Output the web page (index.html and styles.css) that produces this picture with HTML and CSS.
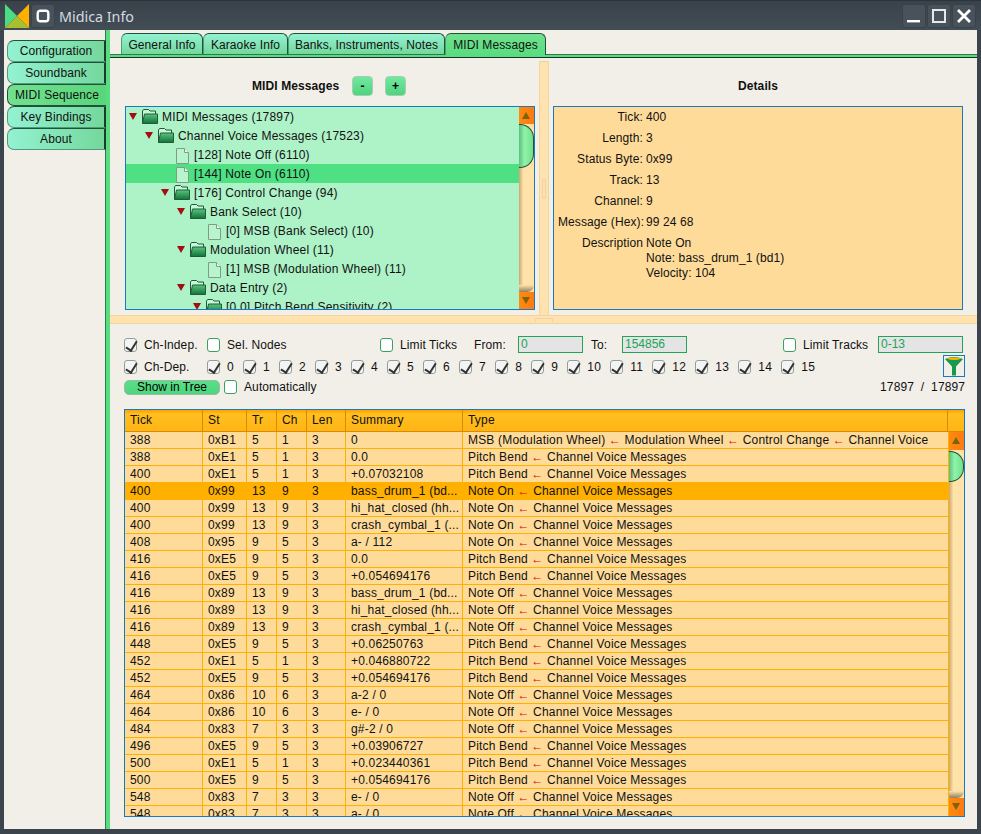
FILE: index.html
```html
<!DOCTYPE html>
<html lang="en">
  <head>
    <meta charset="UTF-8" />
    <title>Midica Info</title>
    <link rel="stylesheet" href="styles.css">
  </head>
  <body>
    <svg class="defs" width="0" height="0">
      <defs>
        <linearGradient id="folderFront" x1="0" y1="0" x2="0" y2="1">
          <stop offset="0" stop-color="#58c67e" />
          <stop offset="1" stop-color="#14713a" />
        </linearGradient>
        <symbol id="folder" viewBox="0 0 16 15">
          <path d="M.5 14.5V2L1.5 .5H6.5L8 2H13.5V5" fill="#c9f5d8" stroke="#1c5c36" />
          <path d="M.5 14.5L2.5 5H15.5V14.5Z" fill="url(#folderFront)" stroke="#1c5c36" />
        </symbol>
        <symbol id="file" viewBox="0 0 13 16">
          <path d="M.5 .5H8.5L12.5 4.5V15.5H.5Z" fill="#b8f4cc" stroke="#7f9c8a" />
          <path d="M8.5 .5V4.5H12.5" fill="#ffffff" stroke="#7f9c8a" />
        </symbol>
      </defs>
    </svg>

    <div class="window">
      <header class="titlebar">
        <svg class="logo" width="24" height="24" viewBox="0 0 24 24">
          <path d="M0 0L12 12L0 24Z" fill="#4cdc84" />
          <path d="M24 0L12 12L24 24Z" fill="#ffb000" />
          <path d="M0 24L12 12L24 24Z" fill="#a8c030" />
        </svg>
        <div class="win-btn app-btn">
          <svg width="14" height="14" viewBox="0 0 14 14">
            <rect x="1.7" y="1.7" width="10.6" height="10.6" rx="2.5" fill="none" stroke="#fff" stroke-width="2.4" />
          </svg>
        </div>
        <span class="title">Midica Info</span>
        <div class="win-btns">
          <div class="win-btn">
            <svg width="14" height="14" viewBox="0 0 14 14"><rect x="0" y="11" width="13" height="2.4" fill="#fff" /></svg>
          </div>
          <div class="win-btn">
            <svg width="14" height="14" viewBox="0 0 14 14"><rect x="1" y="1" width="12" height="12" fill="none" stroke="#e8e8e8" stroke-width="2" /></svg>
          </div>
          <div class="win-btn">
            <svg width="14" height="14" viewBox="0 0 14 14"><path d="M1 1L13 13M13 1L1 13" stroke="#fff" stroke-width="2.8" /></svg>
          </div>
        </div>
      </header>

      <div class="client">
        <nav class="sidebar">
          <div class="side-tab">Configuration</div>
          <div class="side-tab">Soundbank</div>
          <div class="side-tab active">MIDI Sequence</div>
          <div class="side-tab">Key Bindings</div>
          <div class="side-tab">About</div>
        </nav>

        <main class="content">
          <div class="tabs">
            <div class="tab tab-general">General Info</div>
            <div class="tab tab-karaoke">Karaoke Info</div>
            <div class="tab tab-banks">Banks, Instruments, Notes</div>
            <div class="tab tab-midi active">MIDI Messages</div>
          </div>
          <div class="tab-line"></div>

          <section class="top-pane">
            <div class="left-pane">
              <div class="pane-head tree-head">
                <b>MIDI Messages</b>
                <button class="small-btn">-</button>
                <button class="small-btn">+</button>
              </div>
              <div class="tree-box">
                <div class="tree">
                  <div class="node l0"><i class="tri"></i><svg class="ic"><use href="#folder" /></svg>MIDI Messages (17897)</div>
                  <div class="node l1"><i class="tri"></i><svg class="ic"><use href="#folder" /></svg>Channel Voice Messages (17523)</div>
                  <div class="node l2"><i class="no-tri"></i><svg class="ic-file"><use href="#file" /></svg>[128] Note Off (6110)</div>
                  <div class="node l2 selected"><i class="no-tri"></i><svg class="ic-file"><use href="#file" /></svg>[144] Note On (6110)</div>
                  <div class="node l2"><i class="tri"></i><svg class="ic"><use href="#folder" /></svg>[176] Control Change (94)</div>
                  <div class="node l3"><i class="tri"></i><svg class="ic"><use href="#folder" /></svg>Bank Select (10)</div>
                  <div class="node l4"><i class="no-tri"></i><svg class="ic-file"><use href="#file" /></svg>[0] MSB (Bank Select) (10)</div>
                  <div class="node l3"><i class="tri"></i><svg class="ic"><use href="#folder" /></svg>Modulation Wheel (11)</div>
                  <div class="node l4"><i class="no-tri"></i><svg class="ic-file"><use href="#file" /></svg>[1] MSB (Modulation Wheel) (11)</div>
                  <div class="node l3"><i class="tri"></i><svg class="ic"><use href="#folder" /></svg>Data Entry (2)</div>
                  <div class="node l4"><i class="tri"></i><svg class="ic"><use href="#folder" /></svg>[0,0] Pitch Bend Sensitivity (2)</div>
                </div>
                <div class="vscroll tree-scroll">
                  <div class="sb-btn up"></div>
                  <div class="sb-track"><div class="sb-thumb"></div></div>
                  <div class="sb-btn down"></div>
                </div>
              </div>
            </div>

            <div class="v-split"><span class="v-grip"></span></div>

            <div class="right-pane">
              <div class="pane-head"><b>Details</b></div>
              <div class="details">
                <span class="k">Tick:</span><span>400</span>
                <span class="k">Length:</span><span>3</span>
                <span class="k">Status Byte:</span><span>0x99</span>
                <span class="k">Track:</span><span>13</span>
                <span class="k">Channel:</span><span>9</span>
                <span class="k">Message (Hex):</span><span>99 24 68</span>
                <span class="k">Description</span><span class="desc">Note On<br />Note: bass_drum_1 (bd1)<br />Velocity: 104</span>
              </div>
            </div>
          </section>

          <div class="h-split"><span class="h-grip"></span></div>

          <section class="filters">
            <div class="f-row">
              <label class="chk w-indep"><input type="checkbox" checked />Ch-Indep.</label>
              <label class="chk w-sel"><input type="checkbox" />Sel. Nodes</label>
              <label class="chk w-ticks"><input type="checkbox" />Limit Ticks</label>
              <span class="w-from">From:</span>
              <input class="field w-field" value="0" readonly />
              <span class="w-to">To:</span>
              <input class="field w-field w-field-gap" value="154856" readonly />
              <label class="chk w-tracks"><input type="checkbox" />Limit Tracks</label>
              <input class="field w-track-field" value="0-13" readonly />
            </div>
            <div class="f-row">
              <label class="chk w-indep"><input type="checkbox" checked />Ch-Dep.</label>
              <div class="channels">
                <label class="chk"><input type="checkbox" checked />0</label>
                <label class="chk"><input type="checkbox" checked />1</label>
                <label class="chk"><input type="checkbox" checked />2</label>
                <label class="chk"><input type="checkbox" checked />3</label>
                <label class="chk"><input type="checkbox" checked />4</label>
                <label class="chk"><input type="checkbox" checked />5</label>
                <label class="chk"><input type="checkbox" checked />6</label>
                <label class="chk"><input type="checkbox" checked />7</label>
                <label class="chk"><input type="checkbox" checked />8</label>
                <label class="chk"><input type="checkbox" checked />9</label>
                <label class="chk"><input type="checkbox" checked />10</label>
                <label class="chk"><input type="checkbox" checked />11</label>
                <label class="chk"><input type="checkbox" checked />12</label>
                <label class="chk"><input type="checkbox" checked />13</label>
                <label class="chk"><input type="checkbox" checked />14</label>
                <label class="chk"><input type="checkbox" checked />15</label>
              </div>
              <div class="filter-btn">
                <svg width="20" height="20" viewBox="0 0 20 20">
                  <path d="M1 3Q10 -1 19 3L12 10.5V19.5H8V10.5Z" fill="#159a4a" />
                  <path d="M2.5 2.6Q10 .4 17.5 2.6Q10 5.6 2.5 2.6Z" fill="#ffb000" />
                </svg>
              </div>
            </div>
            <div class="f-row f-row-last">
              <button class="show-btn">Show in Tree</button>
              <label class="chk"><input type="checkbox" />Automatically</label>
              <span class="counts">17897&nbsp; /&nbsp; 17897</span>
            </div>
          </section>

          <section class="table-box">
            <div class="row head">
              <span>Tick</span><span>St</span><span>Tr</span><span>Ch</span><span>Len</span><span>Summary</span><span>Type</span><span></span>
            </div>
            <div class="table-body">
              <div class="rows">
                <div class="row"><span>388</span><span>0xB1</span><span>5</span><span>1</span><span>3</span><span>0</span><span>MSB (Modulation Wheel) <i>←</i> Modulation Wheel <i>←</i> Control Change <i>←</i> Channel Voice</span></div>
                <div class="row"><span>388</span><span>0xE1</span><span>5</span><span>1</span><span>3</span><span>0.0</span><span>Pitch Bend <i>←</i> Channel Voice Messages</span></div>
                <div class="row"><span>400</span><span>0xE1</span><span>5</span><span>1</span><span>3</span><span>+0.07032108</span><span>Pitch Bend <i>←</i> Channel Voice Messages</span></div>
                <div class="row selected"><span>400</span><span>0x99</span><span>13</span><span>9</span><span>3</span><span>bass_drum_1 (bd...</span><span>Note On <i>←</i> Channel Voice Messages</span></div>
                <div class="row"><span>400</span><span>0x99</span><span>13</span><span>9</span><span>3</span><span>hi_hat_closed (hh...</span><span>Note On <i>←</i> Channel Voice Messages</span></div>
                <div class="row"><span>400</span><span>0x99</span><span>13</span><span>9</span><span>3</span><span>crash_cymbal_1 (...</span><span>Note On <i>←</i> Channel Voice Messages</span></div>
                <div class="row"><span>408</span><span>0x95</span><span>9</span><span>5</span><span>3</span><span>a- / 112</span><span>Note On <i>←</i> Channel Voice Messages</span></div>
                <div class="row"><span>416</span><span>0xE5</span><span>9</span><span>5</span><span>3</span><span>0.0</span><span>Pitch Bend <i>←</i> Channel Voice Messages</span></div>
                <div class="row"><span>416</span><span>0xE5</span><span>9</span><span>5</span><span>3</span><span>+0.054694176</span><span>Pitch Bend <i>←</i> Channel Voice Messages</span></div>
                <div class="row"><span>416</span><span>0x89</span><span>13</span><span>9</span><span>3</span><span>bass_drum_1 (bd...</span><span>Note Off <i>←</i> Channel Voice Messages</span></div>
                <div class="row"><span>416</span><span>0x89</span><span>13</span><span>9</span><span>3</span><span>hi_hat_closed (hh...</span><span>Note Off <i>←</i> Channel Voice Messages</span></div>
                <div class="row"><span>416</span><span>0x89</span><span>13</span><span>9</span><span>3</span><span>crash_cymbal_1 (...</span><span>Note Off <i>←</i> Channel Voice Messages</span></div>
                <div class="row"><span>448</span><span>0xE5</span><span>9</span><span>5</span><span>3</span><span>+0.06250763</span><span>Pitch Bend <i>←</i> Channel Voice Messages</span></div>
                <div class="row"><span>452</span><span>0xE1</span><span>5</span><span>1</span><span>3</span><span>+0.046880722</span><span>Pitch Bend <i>←</i> Channel Voice Messages</span></div>
                <div class="row"><span>452</span><span>0xE5</span><span>9</span><span>5</span><span>3</span><span>+0.054694176</span><span>Pitch Bend <i>←</i> Channel Voice Messages</span></div>
                <div class="row"><span>464</span><span>0x86</span><span>10</span><span>6</span><span>3</span><span>a-2 / 0</span><span>Note Off <i>←</i> Channel Voice Messages</span></div>
                <div class="row"><span>464</span><span>0x86</span><span>10</span><span>6</span><span>3</span><span>e- / 0</span><span>Note Off <i>←</i> Channel Voice Messages</span></div>
                <div class="row"><span>484</span><span>0x83</span><span>7</span><span>3</span><span>3</span><span>g#-2 / 0</span><span>Note Off <i>←</i> Channel Voice Messages</span></div>
                <div class="row"><span>496</span><span>0xE5</span><span>9</span><span>5</span><span>3</span><span>+0.03906727</span><span>Pitch Bend <i>←</i> Channel Voice Messages</span></div>
                <div class="row"><span>500</span><span>0xE1</span><span>5</span><span>1</span><span>3</span><span>+0.023440361</span><span>Pitch Bend <i>←</i> Channel Voice Messages</span></div>
                <div class="row"><span>500</span><span>0xE5</span><span>9</span><span>5</span><span>3</span><span>+0.054694176</span><span>Pitch Bend <i>←</i> Channel Voice Messages</span></div>
                <div class="row"><span>548</span><span>0x83</span><span>7</span><span>3</span><span>3</span><span>e- / 0</span><span>Note Off <i>←</i> Channel Voice Messages</span></div>
                <div class="row"><span>548</span><span>0x83</span><span>7</span><span>3</span><span>3</span><span>a- / 0</span><span>Note Off <i>←</i> Channel Voice Messages</span></div>
              </div>
              <div class="vscroll table-scroll">
                <div class="sb-btn up"></div>
                <div class="sb-track"><div class="sb-thumb"></div></div>
                <div class="sb-btn down"></div>
              </div>
            </div>
          </section>
        </main>
      </div>
    </div>
  </body>
</html>
```

FILE: styles.css
```css
* {
  box-sizing: border-box;
}
html, body {
  margin: 0;
  height: 100%;
}
body {
  font-family: "Liberation Sans", Arial, sans-serif;
  font-size: 12px;
  letter-spacing: 0.1px;
  color: #111;
  overflow: hidden;
}
.defs {
  position: absolute;
}

.window {
  width: 981px;
  height: 834px;
  display: flex;
  flex-direction: column;
  background: #3b444c;
}

/* title bar */
.titlebar {
  height: 30px;
  flex: none;
  display: flex;
  align-items: flex-start;
  padding: 3px 5px 0 5px;
  background: linear-gradient(#39424a, #434d55);
  border-top: 1px solid #2c3339;
}
.logo {
  flex: none;
}
.win-btn {
  width: 24px;
  height: 24px;
  display: flex;
  align-items: center;
  justify-content: center;
  background: #47525b;
  border: 1px solid #39424a;
  border-radius: 3px;
}
.app-btn {
  margin-left: 2px;
}
.title {
  margin-left: 4px;
  font-family: "Noto Sans", sans-serif;
  font-size: 14.3px;
  line-height: 25px;
  letter-spacing: 0;
  color: #d3dbe1;
}
.win-btns {
  margin-left: auto;
  display: flex;
  gap: 1px;
}

.client {
  flex: 1;
  min-height: 0;
  display: flex;
  margin: 0 4px 5px 4px;
  background: #f2efe9;
}

/* left tabs */
.sidebar {
  width: 106px;
  flex: none;
  padding: 10px 0 0 3px;
  border-right: 4px solid #58dd80;
  box-shadow: inset -1px 0 0 #2f7a4a;
}
.side-tab {
  height: 22px;
  text-align: center;
  line-height: 21px;
  background: linear-gradient(90deg, #93f2d2, #74d89c);
  border: 1px solid #1f5238;
  border-left-color: #4f9a78;
  border-bottom-color: #4f9a78;
  border-right: 2px solid #1f3a2c;
  border-radius: 7px 0 0 7px;
}
.side-tab.active {
  background: linear-gradient(90deg, #72e08e, #58d67c);
  border-right: none;
  border-color: #1f5238;
}

.content {
  flex: 1;
  min-width: 0;
  display: flex;
  flex-direction: column;
}

/* top tabs */
.tabs {
  height: 24px;
  flex: none;
  display: flex;
  padding: 3px 0 0 11px;
}
.tab {
  height: 21px;
  text-align: center;
  line-height: 22px;
  background: linear-gradient(#93f2d2, #74d89c);
  border: 1px solid #1f5238;
  border-bottom: none;
  border-left-color: #4f9a78;
  border-radius: 6px 6px 0 0;
}
.tab-general { width: 82px; }
.tab-karaoke { width: 85px; }
.tab-banks { width: 157px; }
.tab-midi { width: 101px; }
.tab.active {
  height: 22px;
  background: linear-gradient(#72e08e, #58dd80);
  position: relative;
  z-index: 1;
}
.tab-line {
  height: 4px;
  flex: none;
  background: #58dd80;
  border-top: 1px solid #2f7a4a;
  border-bottom: 1px solid #1c2f24;
}

/* tree + details */
.top-pane {
  height: 257px;
  flex: none;
  display: flex;
}
.left-pane {
  width: 429px;
  padding: 18px 4px 0 15px;
}
.right-pane {
  flex: 1;
  padding: 18px 14px 0 4px;
}
.pane-head {
  height: 20px;
  margin-bottom: 10px;
  display: flex;
  align-items: center;
  justify-content: center;
  gap: 12px;
}
.tree-head {
  justify-content: flex-start;
  padding-left: 127px;
}
.tree-head b {
  width: 88px;
  white-space: nowrap;
}
.small-btn {
  width: 21px;
  height: 20px;
  padding: 0;
  font: inherit;
  font-weight: bold;
  background: linear-gradient(#72e8a0, #4fd47e);
  border: 1px solid #a8cdb5;
  border-radius: 4px;
}
.tree-box {
  height: 204px;
  display: flex;
  overflow: hidden;
  background: #aef2c8;
  border: 1px solid #1a7ac0;
}
.tree {
  flex: 1;
  min-width: 0;
  letter-spacing: 0.2px;
}
.node {
  height: 19px;
  padding-top: 1px;
  display: flex;
  align-items: flex-start;
  line-height: 19px;
  white-space: nowrap;
}
.node.selected {
  background: #4fe084;
}
.l0 { padding-left: 3px; }
.l1 { padding-left: 19px; }
.l2 { padding-left: 35px; }
.l3 { padding-left: 51px; }
.l4 { padding-left: 67px; }
.tri {
  width: 8px;
  height: 7px;
  margin: 5px 5px 0 0;
  flex: none;
  background: #a01010;
  clip-path: polygon(0 0, 100% 0, 50% 100%);
}
.no-tri {
  width: 14px;
  flex: none;
}
.ic {
  width: 16px;
  height: 15px;
  margin: 1px 4px 0 0;
  flex: none;
}
.ic-file {
  width: 13px;
  height: 16px;
  margin: 2px 5px 0 1px;
  flex: none;
}

/* scrollbars */
.vscroll {
  flex: none;
  display: flex;
  flex-direction: column;
}
.tree-scroll {
  width: 15px;
}
.table-scroll {
  width: 16px;
  border-left: 1px solid #ffb000;
}
.sb-btn {
  height: 17px;
  flex: none;
  position: relative;
  background: linear-gradient(90deg, #ff8a10, #ff7a10);
}
.sb-btn::after {
  content: "";
  position: absolute;
  left: 3px;
  top: 5px;
  width: 8px;
  height: 7px;
  background: #7a6408;
}
.sb-btn.up::after {
  clip-path: polygon(50% 0, 100% 100%, 0 100%);
}
.sb-btn.down::after {
  clip-path: polygon(0 0, 100% 0, 50% 100%);
}
.sb-track {
  flex: 1;
  position: relative;
  background: linear-gradient(90deg, #c9a878, #ffe2a8 30%, #ffe2a8);
}
.sb-track::after {
  content: "";
  position: absolute;
  left: 0;
  right: 0;
  bottom: 0;
  height: 7px;
  background: linear-gradient(#ffe2a8, #8f8060);
  border-radius: 0 0 10px 2px;
}
.sb-thumb {
  height: 44px;
  background: linear-gradient(90deg, #58c080, #92f2a8 40%, #6fe090);
  border: 1px solid #1f5238;
  border-left: none;
  border-radius: 0 14px 14px 0;
}
.table-scroll .sb-thumb {
  height: 31px;
  margin-top: 1px;
}
.table-scroll .sb-btn {
  height: 18px;
}

.v-split {
  width: 10px;
  flex: none;
  margin: 3px 0 0 0;
  display: flex;
  align-items: center;
  justify-content: center;
  background: #ffe2ad;
  border: 1px solid #efd49e;
  border-bottom: none;
}
.v-grip {
  width: 4px;
  height: 20px;
  border: 1px solid #f0d0a8;
  border-radius: 2px;
}
.details {
  height: 204px;
  padding: 3px 4px;
  display: grid;
  grid-template-columns: 85px 1fr;
  grid-auto-rows: 21px;
  column-gap: 3px;
  align-items: start;
  line-height: 15px;
  background: #ffdb99;
  border: 1px solid #1a7ac0;
}
.k {
  text-align: right;
  white-space: nowrap;
}
.h-split {
  height: 9px;
  flex: none;
  display: flex;
  justify-content: center;
  background: #ffe2ad;
  border-top: 1px solid #efd49e;
  border-bottom: 1px solid #efd49e;
}
.h-grip {
  width: 18px;
  height: 4px;
  margin-top: 2px;
  border: 1px solid #f0d0a8;
  border-bottom: none;
  border-radius: 2px 2px 0 0;
}

/* filter area */
.filters {
  height: 85px;
  flex: none;
  padding: 10px 12px 0 14px;
}
.f-row {
  height: 22px;
  display: flex;
  align-items: center;
}
.f-row-last {
  height: 18px;
}
.chk {
  display: flex;
  align-items: center;
  white-space: nowrap;
}
.chk input {
  appearance: none;
  width: 13px;
  height: 14px;
  margin: 0 7px 0 0;
  position: relative;
  background: #fff;
  border: 1px solid #3aa060;
  border-radius: 3px;
}
.chk input:checked {
  background: #f4f4f4;
  border-color: #8fa098;
}
.chk input:checked::after {
  content: "";
  position: absolute;
  left: 3px;
  top: 0;
  width: 5px;
  height: 10px;
  border-right: 2px solid #333;
  border-bottom: 2px solid #333;
  transform: rotate(32deg);
}
.w-indep { width: 83px; }
.w-sel { width: 173px; }
.w-ticks { width: 94px; }
.w-from { width: 44px; }
.w-to { width: 31px; margin-left: 8px; }
.w-field { width: 65px; }
.w-field-gap { margin-right: 96px; }
.w-tracks { width: 95px; }
.w-track-field { width: 85px; }
.field {
  height: 17px;
  margin-top: -2px;
  padding: 0 2px;
  font: inherit;
  color: #21a35a;
  background: #e4e4e4;
  border: 1px solid #21a35a;
  outline: none;
}
.channels {
  display: flex;
  gap: 9px;
}
.channels .chk {
  min-width: 27px;
  letter-spacing: 0.33px;
}
.filter-btn {
  width: 22px;
  height: 22px;
  margin: -2px 0 0 auto;
  display: flex;
  align-items: center;
  justify-content: center;
  border: 1px solid #1a7ac0;
}
.show-btn {
  width: 96px;
  height: 15px;
  margin-right: 4px;
  padding: 0;
  font: inherit;
  line-height: 12px;
  background: linear-gradient(#58e088, #4ed67e);
  border: 1px solid #9ab8a4;
  border-radius: 5px;
}
.counts {
  margin-left: auto;
}

/* message table */
.table-box {
  width: 841px;
  height: 408px;
  flex: none;
  margin-left: 14px;
  display: flex;
  flex-direction: column;
  overflow: hidden;
  background: #ffdb99;
  border: 1px solid #1a7ac0;
}
.row {
  height: 17px;
  display: grid;
  grid-template-columns: 78px 44px 30px 30px 39px 117px 485px;
  line-height: 16px;
  letter-spacing: 0.18px;
  white-space: nowrap;
  border-bottom: 1px solid #ffb000;
}
.row span {
  padding-left: 5px;
  overflow: hidden;
  border-right: 1px solid #ffb000;
}
.row span:last-child {
  border-right: none;
}
.row i {
  font-style: normal;
  color: #d80808;
}
.row.selected {
  background: #ffb000;
}
.row.selected span {
  border-right-color: #ffb000;
}
.row.head {
  height: 22px;
  flex: none;
  grid-template-columns: 78px 44px 30px 30px 39px 117px 485px 1fr;
  line-height: 20px;
  background: linear-gradient(#ffa000, #ffc020 20%, #ffb414);
  border-bottom: 1px solid #d98a00;
}
.row.head span {
  border-right-color: #d98a00;
}
.table-body {
  flex: 1;
  min-height: 0;
  display: flex;
}
.rows {
  flex: 1;
  min-width: 0;
  overflow: hidden;
}
```
